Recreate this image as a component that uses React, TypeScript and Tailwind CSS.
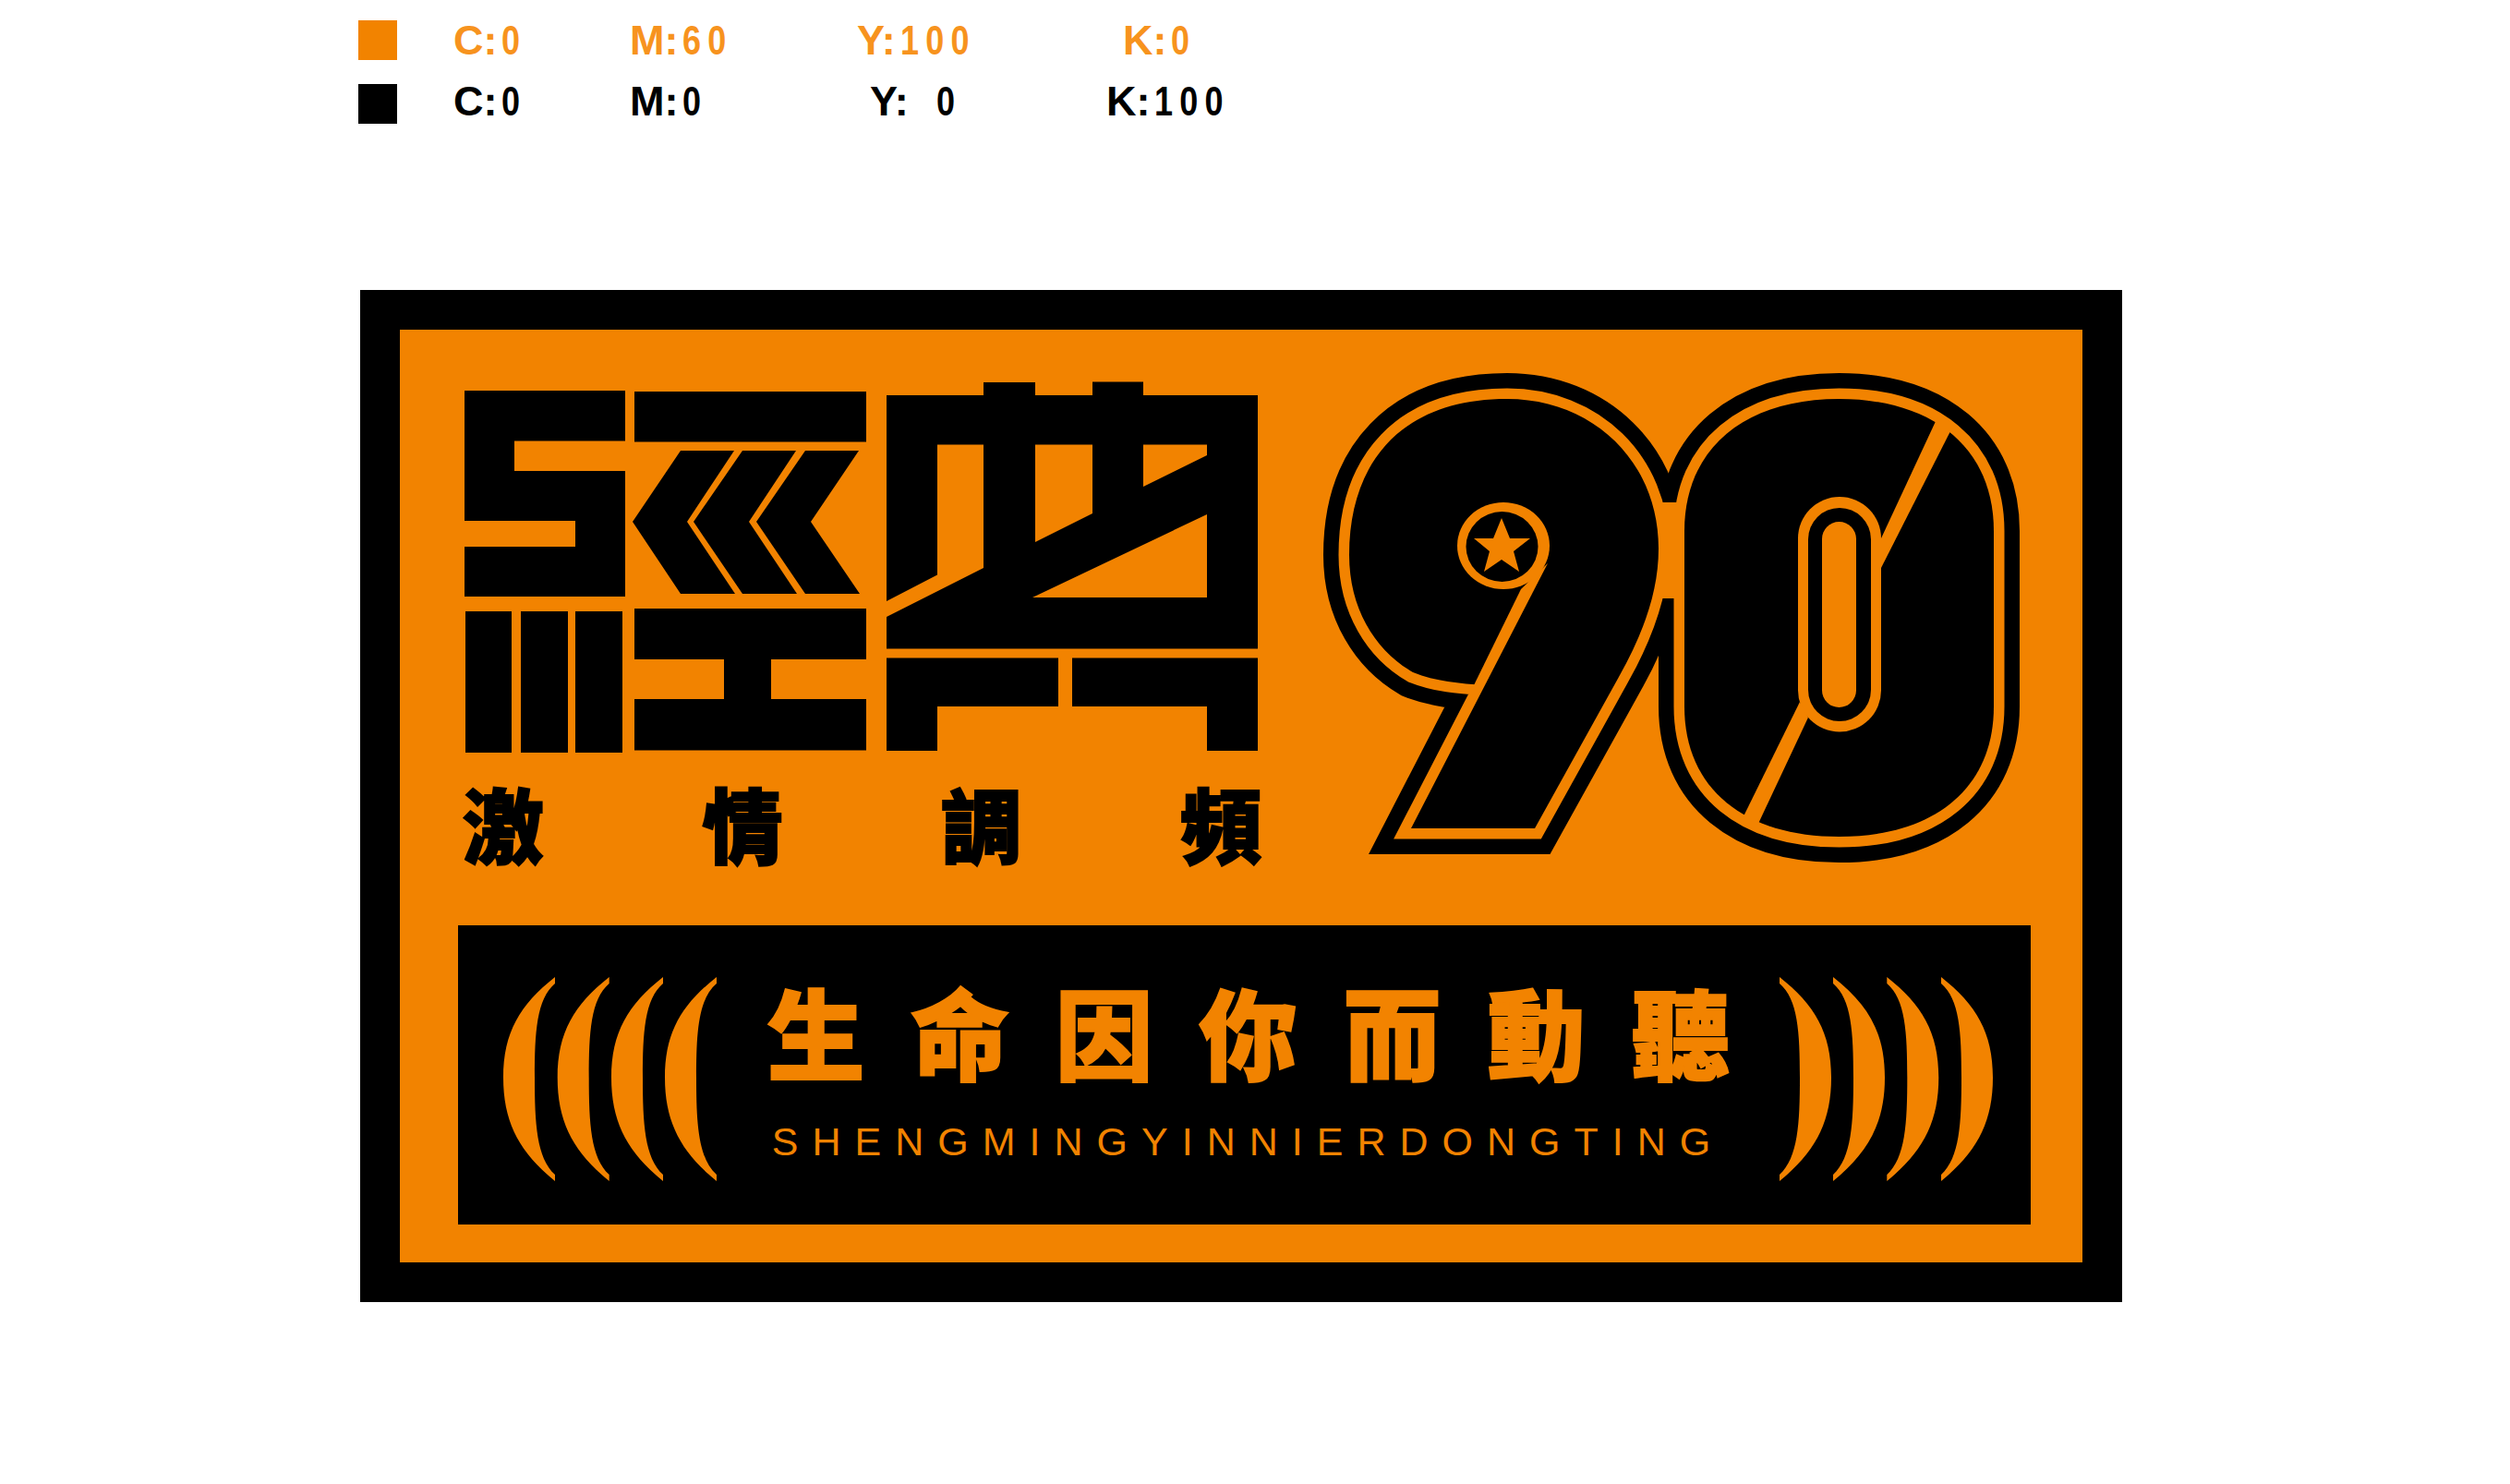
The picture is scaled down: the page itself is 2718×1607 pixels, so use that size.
import React from 'react';

const ORANGE = '#f28300';

const NINE = 'M1528 897 H1662 L1753 733 C1780 685 1796 640 1796 594 C1796 500 1725 432 1632 432 C1518 432 1461 500 1461 601 C1461 660 1490 705 1530 728 C1555 738 1580 740 1608 742 Z';
const ZERO = 'M1824 575 C1824 485 1890 432 1991.5 432 C2093 432 2159 485 2159 575 V765 C2159 855 2093 906 1991.5 906 C1890 906 1824 855 1824 765 Z';

const swatchRows = [
  {
    swatch: 'bg-[#f28300]',
    text: 'text-[#f7931e]',
    cols: [
      { key: 'C:', val: '0', w: 'w-[191px]' },
      { key: 'M:', val: '60', w: 'w-[246px]' },
      { key: 'Y:', val: '100', w: 'w-[288px]' },
      { key: 'K:', val: '0', w: 'w-[120px]' },
    ],
  },
  {
    swatch: 'bg-black',
    text: 'text-black pb-[6px]',
    cols: [
      { key: 'C:', val: '0', w: 'w-[191px]' },
      { key: 'M:', val: '0', w: 'w-[260px]' },
      { key: 'Y:  ', val: '0', w: 'w-[256px]' },
      { key: 'K:', val: '100', w: 'w-[130px]' },
    ],
  },
];

const JingDian = () => (
  <svg width="862" height="402" viewBox="500 413 862 402" className="block">
    <g fill="#000">
      {/* left part */}
      <path d="M502 423 H676 V477.5 H556 V510 H676 V646 H502 V592 H622 V564 H502 Z" />
      <rect x="686" y="424" width="251" height="54.5" />
      <path d="M736 488 H794 L743 565 L795 643 H736 L684 565 Z" />
      <path d="M803 488 H861 L810 565 L862 643 H803 L750 565 Z" />
      <path d="M871 488 H929 L877 565 L930 643 H871 L818 565 Z" />
      <rect x="503" y="662" width="50" height="153" />
      <rect x="563" y="662" width="51" height="153" />
      <rect x="622" y="662" width="51" height="153" />
      <path d="M686 659 H937 V714 H834 V757 H937 V812.5 H686 V757 H783 V714 H686 Z" />
      {/* right part */}
      <path
        fillRule="evenodd"
        d="M959 428 H1064 V414 H1120 V428 H1182 V413.5 H1237 V428 H1361 V702.5 H959 Z
           M1014 481.5 H1064 V615 L959 668 V651 L1014 622.5 Z
           M1120 481.5 H1182 V556 L1120 587 Z
           M1237 481.5 H1306 V493 L1237 527 Z
           M1306 557 V647 H1117 Z"
      />
      <path d="M959 712.5 H1145 V765 H1014 V813 H959 Z" />
      <path d="M1160 712.5 H1361 V813 H1306 V765 H1160 Z" />
    </g>
  </svg>
);

const Ninety = () => (
  <svg width="780" height="550" viewBox="1420 395 780 550" className="block">
    <g fill="none" stroke="#000" strokeWidth="56" strokeMiterlimit="10">
      <path d={NINE} />
      <path d={ZERO} />
    </g>
    <g fill="none" stroke={ORANGE} strokeWidth="23" strokeMiterlimit="10">
      <path d={NINE} />
      <path d={ZERO} />
    </g>
    <rect x="1790" y="544" width="36" height="104" fill={ORANGE} />
    <path d={NINE} fill="#000" />
    <path d={ZERO} fill="#000" />
    {/* 9 eye and tail */}
    <g fill={ORANGE}>
      <ellipse cx="1628" cy="591" rx="50" ry="47" />
      <path d="M1676 610 L1608 742 H1596 L1647 638 Z" />
    </g>
    <ellipse cx="1626.5" cy="592" rx="39" ry="38" fill="#000" />
    <path d="M1626 561 L1635 583 H1657 L1639 597 L1645 619 L1626 606 L1607 619 L1613 597 L1596 583 H1617 Z" fill={ORANGE} />
    {/* 0 counter */}
    <rect x="1947" y="538" width="90" height="254.5" rx="45" fill={ORANGE} />
    <path d="M2037 583 L2098 452 L2112 467 L2037 615 Z" fill={ORANGE} />
    <path d="M1949 760 L1958 777 L1903 894 L1888 884 Z" fill={ORANGE} />
    <rect x="1958" y="550" width="68" height="231" rx="34" fill="#000" />
    <rect x="1973" y="565" width="37" height="201" rx="18.5" fill={ORANGE} />
  </svg>
);

const Waves = ({ flip }: { flip?: boolean }) => (
  <svg width="232" height="222" viewBox="0 0 232 222" className={flip ? 'block -scale-x-100' : 'block'}>
    {[0, 58.7, 117, 175].map((dx) => (
      <path
        key={dx}
        transform={`translate(${dx} 0)`}
        fill={ORANGE}
        d="M56 0 C18 30 0 60 0 109 C0 158 18 190 56 221 L56 214 C36 196 34 158 34 109 C34 60 36 24 56 7 Z"
      />
    ))}
  </svg>
);

export default function App() {
  return (
    <div className="w-[2718px] h-[1607px] bg-white overflow-hidden font-['Liberation_Sans','Noto_Sans_CJK_TC',sans-serif]">
      {/* colour spec */}
      <div className="pl-[388px] pt-[22px] flex flex-col gap-[26px]">
        {swatchRows.map((row, i) => (
          <div key={i} className="flex items-center h-[43px]">
            <div className={`w-[42px] h-[43px] mr-[61px] ${row.swatch}`} />
            {row.cols.map((col) => (
              <span
                key={col.key + col.w}
                className={`text-[45px] leading-none font-bold whitespace-pre ${col.w} ${row.text}`}
              >
                {col.key}
                <span className="inline-block ml-[5px] origin-left scale-x-[.8] tracking-[9px]">{col.val}</span>
              </span>
            ))}
          </div>
        ))}
      </div>

      {/* logo plate */}
      <div className="ml-[390px] mt-[180px] w-[1908px] h-[1096px] bg-black p-[43px]">
        <div className="w-full h-full bg-[#f28300]">
          <div className="flex items-start h-[645px] pl-[68px]">
            <div className="mt-[56px]">
              <JingDian />
              <div className="mt-[20px] w-[865px] flex justify-between text-black text-[88px] leading-[110px] font-black [-webkit-text-stroke:2px_#000] font-['Noto_Sans_CJK_TC',sans-serif]">
                <span>激</span>
                <span>情</span>
                <span>調</span>
                <span>頻</span>
              </div>
            </div>
            <div className="mt-[38px] ml-[54px]">
              <Ninety />
            </div>
          </div>

          <div className="ml-[63px] w-[1703px] h-[324px] bg-black flex items-center pl-[49px] pr-[41px] pt-[10px]">
            <Waves />
            <div className="flex-1 flex flex-col items-center pb-[25px] text-[#f28300]">
              <div className="flex gap-[50px] text-[106px] leading-[126px] font-black [-webkit-text-stroke:2px_#f28300] font-['Noto_Sans_CJK_TC',sans-serif]">
                <span>生</span>
                <span>命</span>
                <span>因</span>
                <span>你</span>
                <span>而</span>
                <span>動</span>
                <span>聽</span>
              </div>
              <div className="mt-[33px] text-[43px] leading-[50px] tracking-[15px] font-['Liberation_Sans',sans-serif]">
                SHENGMINGYINNIERDONGTING
              </div>
            </div>
            <Waves flip />
          </div>
        </div>
      </div>
    </div>
  );
}
